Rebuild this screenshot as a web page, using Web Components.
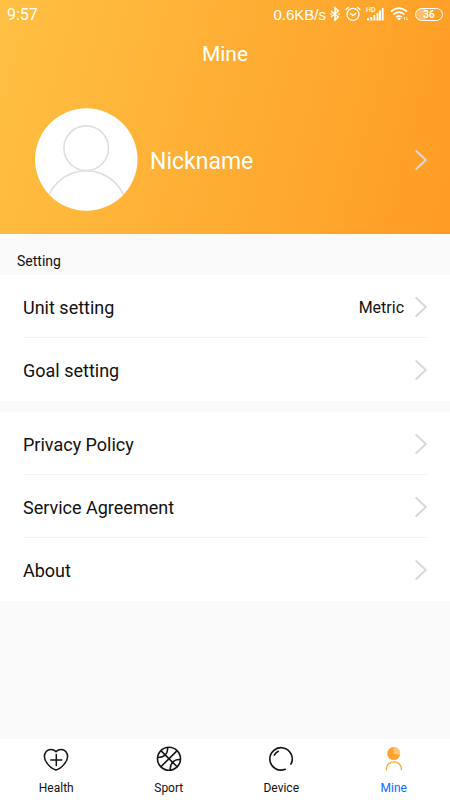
<!DOCTYPE html>
<html lang="en">
<head>
<meta charset="utf-8">
<meta name="viewport" content="width=device-width, initial-scale=1">
<title>Mine</title>
<style>
  body { margin: 0; font-family: Roboto, "Noto Sans", sans-serif; color: #111; background: #fafafa; }
</style>
</head>
<body>
<mine-page></mine-page>
<script>
const define = (name, html) => customElements.define(name, class extends HTMLElement {
  constructor() {
    super();
    this.attachShadow({ mode: 'open' }).innerHTML = html;
  }
});

define('chevron-icon', `
<style>:host { display: block; flex: none; width: 12px; height: 20px; } svg { display: block; }</style>
<svg width="12" height="20" viewBox="0 0 12 20" fill="none" stroke="#d8d8d8" stroke-width="2" stroke-linecap="round" stroke-linejoin="round" aria-hidden="true"><path d="M1.3 1 L10.8 10 L1.3 19"/></svg>`);

define('status-bar', `
<style>
  :host { display: flex; align-items: center; height: 28px; padding: 0 7px; color: #fff; font-size: 15px; line-height: 20px; }
  .time { margin-right: auto; padding-top: 2px; font-size: 16px; }
  .rate { padding-top: 2px; font-family: "Liberation Sans", sans-serif; }
  svg { display: block; flex: none; }
  .signal { display: grid; margin-left: 5px; }
  .signal > * { grid-area: 1 / 1; }
  .hd { font-size: 7px; line-height: 7px; font-weight: 500; }
  .battery { box-sizing: border-box; width: 28px; height: 13px; margin-left: 6px; border: 1px solid #fff; border-radius: 7px;
    background: linear-gradient(90deg, rgba(255,255,255,.3) 40%, transparent 40%);
    font-size: 10px; line-height: 12px; font-weight: 700; text-align: center; }
</style>
<span class="time">9:57</span>
<span class="rate">0.6KB/s</span>
<svg width="17" height="16" viewBox="0 0 17 16" fill="none" stroke="#fff" stroke-width="1.500"><path d="M5 5 L12.300 11 L9 14 V2 L12.300 5 L5 11"/><path d="M4.400 8h1.400M12.200 8h1.400" stroke-width="1.600"/></svg>
<svg style="margin-left:2px" width="16" height="16" viewBox="0 0 16 16" fill="none" stroke="#fff" stroke-width="1.300" stroke-linecap="round"><circle cx="8" cy="8.400" r="6"/><path d="M5.300 7.600 L8 9.600 L10.800 7.400M1 3.600 L3.500 1.400M15 3.600 L12.500 1.400"/></svg>
<span class="signal">
  <svg width="18" height="14" viewBox="0 0 18 14" fill="#fff"><path d="M1 11h2v2.500H1zM4.200 10h2v3.500h-2zM7.400 8h2v5.500h-2zM10.500 6h2v7.500h-2zM13 3.500h2v10h-2zM15.800 1h1.800v12.500h-1.800z"/></svg>
  <span class="hd">HD</span>
</span>
<svg style="margin-left:6px" width="19" height="14" viewBox="0 0 19 14" fill="none" stroke="#fff" stroke-width="1.700"><path d="M1 4.700 Q9 -2.300 17 4.700M3.500 7.500 Q9 2.700 14.500 7.500M6 10.200 Q9 7.500 12 10.200"/><path d="M7 11.300 Q9 9.800 11 11.300 L9 13.500z" fill="#fff" stroke="none"/><path d="M14.700 13V10M13.700 11l1-1M16.800 10v3M17.800 12l-1 1" stroke-width=".8"/></svg>
<span class="battery">36</span>`);

define('profile-header', `
<style>
  :host { display: block; color: #fff; background: linear-gradient(105deg, #ffc043 0%, #feae34 50%, #fe9c24 100%); }
  h1 { margin: 0; font-size: 21px; line-height: 52px; font-weight: 400; text-align: center; }
  button { display: flex; align-items: center; gap: 12px; width: 100%; margin: 0; padding: 28px 23px 22px 34px; border: 0; background: none;
    font: inherit; font-size: 23px; line-height: 28px; color: inherit; text-align: left; }
  .name { flex: 1; padding-top: 3px; }
  svg { display: block; flex: none; }
</style>
<status-bar></status-bar>
<h1><slot name="title"></slot></h1>
<button type="button">
  <svg width="104" height="104" viewBox="0 0 104 104" fill="none" aria-hidden="true">
    <defs><clipPath id="disc"><circle cx="52.300" cy="51.500" r="51"/></clipPath></defs>
    <circle cx="52.300" cy="51.500" r="51.200" fill="#fff"/>
    <g clip-path="url(#disc)" stroke="#dedede" stroke-width="1.600"><circle cx="52.200" cy="40.200" r="22.300"/><circle cx="52.200" cy="103.500" r="40.800"/></g>
  </svg>
  <span class="name"><slot></slot></span>
  <chevron-icon></chevron-icon>
</button>`);

define('setting-group', `
<style>
  :host { display: block; }
  .rows { background: #fff; }
</style>
<div class="rows"><slot></slot></div>`);

define('setting-row', `
<style>
  :host { display: block; padding: 0 23px; }
  button { display: flex; align-items: center; gap: 11px; box-sizing: border-box; width: 100%; height: 63px; margin: 0; padding: 1px 0 0;
    border: 0; border-bottom: 1px solid #f2f2f2; background: none; font: inherit; font-size: 18px; line-height: 24px; color: inherit; text-align: left; }
  :host(:last-child) button { border-bottom-color: transparent; }
  .label { flex: 1; padding-top: 2px; }
  .value { padding-top: 2px; font-size: 16px; }
</style>
<button type="button"><span class="label"><slot></slot></span><span class="value"><slot name="value"></slot></span><chevron-icon></chevron-icon></button>`);

define('tab-item', `
<style>
  :host { display: block; flex: 1; }
  a { display: flex; flex-direction: column; align-items: center; gap: 7px; padding: 6px 0 4px; color: #111; text-decoration: none; font-size: 12px; line-height: 16px; }
  :host([current]) a { color: #0a6cff; }
</style>
<a href="#"><slot name="icon"></slot><span><slot></slot></span></a>`);

define('tab-bar', `
<style>
  :host { display: flex; background: #fff; }
  svg { display: block; width: 28px; height: 28px; }
</style>
<tab-item><svg slot="icon" viewBox="0 0 28 28" fill="none" stroke="#151515" stroke-width="1.500" stroke-linecap="round" aria-hidden="true"><path d="M14 6.600 C10.800 3.600 6.500 4.200 4.200 6.500 C1.300 10.200 2.600 15.200 5.600 18.900 C8 22 11 24.200 14 25 C17 24.200 20 22 22.400 18.900 C25.400 15.200 26.700 10.200 23.800 6.500 C21.500 4.200 17.200 3.600 14 6.600Z"/><path d="M14.300 9.500V20.500M8.800 15H19.800"/></svg>Health</tab-item>
<tab-item><svg slot="icon" viewBox="0 0 28 28" fill="none" stroke="#151515" stroke-width="1.600" aria-hidden="true"><circle cx="14" cy="13.700" r="11.500"/><path d="M5.900 5.600 L22.100 21.800M22.100 5.600 L5.900 21.800M12.600 2.500 C13.200 8.500 9.500 12.600 2.800 12.500M25.300 14.500 C18.500 14.200 14.800 18.500 15.200 25"/></svg>Sport</tab-item>
<tab-item><svg slot="icon" viewBox="0 0 28 28" fill="none" stroke="#151515" stroke-width="1.600" stroke-linecap="round" aria-hidden="true"><path d="M18.200 24.300 A11.200 11.200 0 1 1 23.900 19.200M7.300 10.100 Q8.800 7.500 11.300 6.300"/></svg>Device</tab-item>
<tab-item current><svg slot="icon" viewBox="0 0 28 28" fill="none" aria-hidden="true"><circle cx="13.700" cy="8.600" r="6.500" fill="#ffa42e"/><path d="M13.700 8.600V2.100A6.500 6.500 0 0 1 20 10.200Z" fill="#ffc67c"/><path d="M6.300 24.700 C6.300 14.300 21.500 14.300 21.500 24.700" stroke="#ffa42e" stroke-width="1.400" stroke-linecap="round"/></svg>Mine</tab-item>`);

define('mine-page', `
<style>
  :host { display: flex; flex-direction: column; min-height: 100vh; }
  main { flex: 1; }
  h2 { box-sizing: border-box; height: 41px; margin: 0; padding: 17px 17px 0; font-size: 14px; line-height: 20px; font-weight: 400; }
  setting-group + setting-group { margin-top: 11px; }
</style>
<profile-header><span slot="title">Mine</span>Nickname</profile-header>
<main>
  <h2>Setting</h2>
  <setting-group>
    <setting-row>Unit setting<span slot="value">Metric</span></setting-row>
    <setting-row>Goal setting</setting-row>
  </setting-group>
  <setting-group>
    <setting-row>Privacy Policy</setting-row>
    <setting-row>Service Agreement</setting-row>
    <setting-row>About</setting-row>
  </setting-group>
</main>
<nav><tab-bar></tab-bar></nav>`);
</script>
</body>
</html>
